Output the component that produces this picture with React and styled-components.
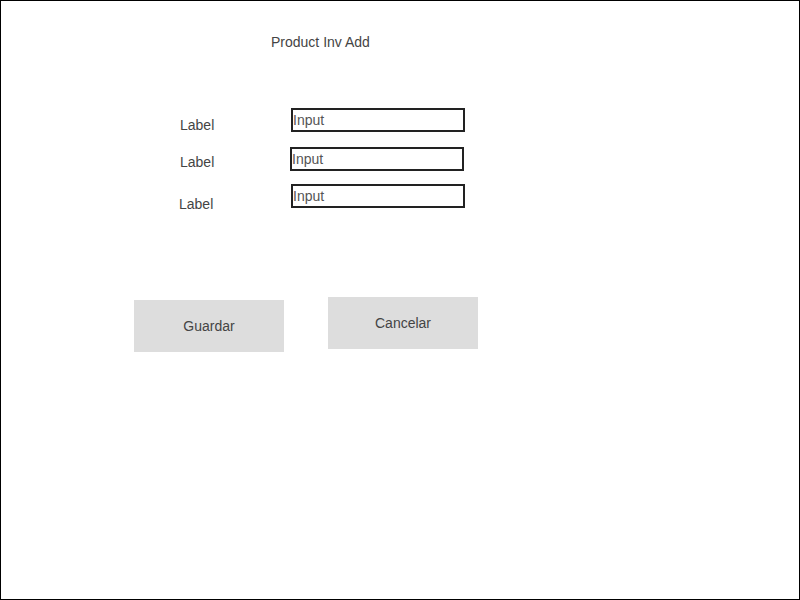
import React from "react";
import styled, { createGlobalStyle } from "styled-components";

const GlobalStyle = createGlobalStyle`
  body {
    margin: 0;
    background: #fff;
    font-family: "Liberation Sans", Arial, sans-serif;
  }
`;

const fields = [
  { labelX: 180, inputX: 291, gap: 58, drop: 9 },
  { labelX: 180, inputX: 290, gap: 15, drop: 7 },
  { labelX: 179, inputX: 291, gap: 13, drop: 12 },
];

const App = () => {
  return (
    <>
      <GlobalStyle />
      <Page>
        <Title>Product Inv Add</Title>
        <Form>
          {fields.map((f, i) => (
            <Row key={i} gap={f.gap} left={f.labelX - 1}>
              <Label width={f.inputX - f.labelX} drop={f.drop}>Label</Label>
              <Input defaultValue="Input" readOnly />
            </Row>
          ))}
        </Form>
        <Actions>
          <Button drop={3}>Guardar</Button>
          <Button>Cancelar</Button>
        </Actions>
      </Page>
    </>
  );
};

const Page = styled.div`
  width: 800px;
  height: 600px;
  box-sizing: border-box;
  border: 1px solid #000;
  display: flex;
  flex-direction: column;
  color: #444;
`;

const Title = styled.div`
  margin-top: 33px;
  padding-left: 270px;
  font-size: 14px;
  line-height: 16px;
`;

const Form = styled.div`
  display: flex;
  flex-direction: column;
`;

const Row = styled.div`
  display: flex;
  align-items: flex-start;
  height: 24px;
  margin-top: ${(p) => p.gap}px;
  padding-left: ${(p) => p.left}px;
`;

const Label = styled.span`
  width: ${(p) => p.width}px;
  padding-top: ${(p) => p.drop}px;
  font-size: 14px;
  line-height: 16px;
`;

const Input = styled.input`
  box-sizing: border-box;
  width: 174px;
  height: 24px;
  margin: 0;
  padding: 0;
  border: 2px solid #222;
  border-radius: 0;
  outline: none;
  background: #fff;
  color: #555;
  font-family: "Liberation Sans", Arial, sans-serif;
  font-size: 14px;
`;

const Actions = styled.div`
  display: flex;
  align-items: flex-start;
  gap: 44px;
  margin-top: 89px;
  padding-left: 133px;
`;

const Button = styled.button`
  box-sizing: border-box;
  width: 150px;
  height: 52px;
  margin: ${(p) => p.drop || 0}px 0 0;
  border: none;
  border-radius: 0;
  background: #ddd;
  color: #444;
  font-family: "Liberation Sans", Arial, sans-serif;
  font-size: 14px;
`;

export default App;
